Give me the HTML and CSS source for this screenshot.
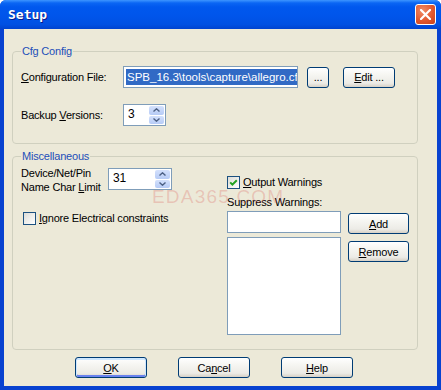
FILE: index.html
```html
<!DOCTYPE html>
<html lang="en">
<head>
    <meta charset="UTF-8">
    <title>Setup</title>
    <link rel="stylesheet" href="styles.css">
</head>
<body>

<div class="window">
    <div class="titlebar">
        <span class="title">Setup</span>
        <button class="close" title="Close">
            <svg width="11" height="11" viewBox="0 0 11 11"><path d="M1 1 L10 10 M10 1 L1 10" stroke="#fff" stroke-width="2.2" stroke-linecap="round"/></svg>
        </button>
    </div>

    <div class="client">
        <fieldset class="group cfg">
            <legend>Cfg Config</legend>
            <div class="row">
                <label class="lbl-file"><u>C</u>onfiguration File:</label>
                <div class="edit file"><span class="sel">SPB_16.3\tools\capture\allegro.cfg</span></div>
                <button class="btn btn-browse">...</button>
                <button class="btn btn-edit"><u>E</u>dit ...</button>
            </div>
            <div class="row row-backup">
                <label class="lbl-file">Backup <u>V</u>ersions:</label>
                <div class="spin spin-backup">
                    <span class="spin-val">3</span>
                    <div class="spin-btns">
                        <span><svg width="7" height="4" viewBox="0 0 7 4"><path d="M0.5 3.5 L3.5 0.8 L6.5 3.5" fill="none" stroke="#4D6185" stroke-width="1.4"/></svg></span>
                        <span><svg width="7" height="4" viewBox="0 0 7 4"><path d="M0.5 0.5 L3.5 3.2 L6.5 0.5" fill="none" stroke="#4D6185" stroke-width="1.4"/></svg></span>
                    </div>
                </div>
            </div>
        </fieldset>

        <fieldset class="group misc">
            <legend>Miscellaneous</legend>
            <div class="misc-cols">
                <div class="misc-left">
                    <div class="limit-row">
                        <label class="lbl-limit">Device/Net/Pin<br>Name Char <u>L</u>imit</label>
                        <div class="spin spin-limit">
                            <span class="spin-val">31</span>
                            <div class="spin-btns">
                                <span><svg width="7" height="4" viewBox="0 0 7 4"><path d="M0.5 3.5 L3.5 0.8 L6.5 3.5" fill="none" stroke="#4D6185" stroke-width="1.4"/></svg></span>
                                <span><svg width="7" height="4" viewBox="0 0 7 4"><path d="M0.5 0.5 L3.5 3.2 L6.5 0.5" fill="none" stroke="#4D6185" stroke-width="1.4"/></svg></span>
                            </div>
                        </div>
                    </div>
                    <div class="check-row check-ignore">
                        <span class="check"></span>
                        <span><u>I</u>gnore Electrical constraints</span>
                    </div>
                </div>

                <div class="misc-right">
                    <div class="check-row check-output">
                        <span class="check">
                            <svg width="11" height="11" viewBox="0 0 11 11"><path d="M2.2 5.4 L4.4 7.6 L8.8 3.2" fill="none" stroke="#21A121" stroke-width="2"/></svg>
                        </span>
                        <span><u>O</u>utput Warnings</span>
                    </div>
                    <div class="suppress-lbl">Suppress Warnings:</div>
                    <div class="suppress">
                        <div class="suppress-fields">
                            <div class="edit warn-input"></div>
                            <div class="edit warn-list"></div>
                        </div>
                        <div class="suppress-btns">
                            <button class="btn btn-side"><u>A</u>dd</button>
                            <button class="btn btn-side"><u>R</u>emove</button>
                        </div>
                    </div>
                </div>

                <div class="watermark">EDA365.COM</div>
            </div>
        </fieldset>

        <div class="actions">
            <button class="btn btn-main btn-default"><u>O</u>K</button>
            <button class="btn btn-main">Ca<u>n</u>cel</button>
            <button class="btn btn-main"><u>H</u>elp</button>
        </div>
    </div>
</div>

</body>
</html>
```

FILE: styles.css
```css
body {
    margin: 0;
    background: #fff;
    font-family: "Liberation Sans", Arial, sans-serif;
    font-size: 11px;
    letter-spacing: -0.2px;
    color: #000;
}

.window {
    width: 441px;
    height: 390px;
    display: flex;
    flex-direction: column;
    background: #0842D0;
    border-radius: 6px 6px 0 0;
    overflow: hidden;
}

.titlebar {
    height: 29px;
    flex: none;
    display: flex;
    align-items: center;
    padding: 0 5px 0 8px;
    background: linear-gradient(to bottom, #3D95FF 0, #0A66F4 3px, #0058EE 7px, #0055EB 55%, #0050E2 85%, #0043CF 100%);
}

.title {
    flex: 1;
    font-family: "DejaVu Sans Mono", monospace;
    font-weight: bold;
    font-size: 13px;
    letter-spacing: 0;
    color: #fff;
    text-shadow: 1px 1px 0 #0A1A8A;
}

.close {
    width: 21px;
    height: 21px;
    padding: 0;
    display: flex;
    align-items: center;
    justify-content: center;
    border: 1px solid #fff;
    border-radius: 3px;
    background: radial-gradient(circle at 35% 30%, #F08C68 0, #E2582F 55%, #C7411B 100%);
}

.client {
    flex: 1;
    margin: 0 4px 4px;
    padding: 15px 0 0 8px;
    background: #ECE9D8;
}

/* group boxes */
.group {
    margin: 0;
    width: 406px;
    box-sizing: border-box;
    min-width: 0;
    padding: 0 8px;
    border: 1px solid #D0D0BF;
    border-radius: 4px;
}

.group legend {
    padding: 0 1px;
    line-height: 14px;
    color: #1D4FB8;
}

.cfg {
    padding-top: 8px;
    padding-bottom: 17px;
}

.row {
    display: flex;
    align-items: center;
    height: 22px;
}

.row-backup {
    margin-top: 16px;
}

.lbl-file {
    width: 102px;
    flex: none;
    white-space: nowrap;
}

.edit {
    background: #fff;
    border: 1px solid #7F9DB9;
    box-sizing: border-box;
}

.file {
    width: 175px;
    height: 22px;
    padding: 2px 0 2px 2px;
    overflow: hidden;
    white-space: nowrap;
}

.sel {
    display: inline-block;
    height: 16px;
    line-height: 16px;
    padding: 0 1px;
    font-size: 11.5px;
    letter-spacing: 0;
    background: #316AC5;
    color: #fff;
}

/* buttons */
.btn {
    font: inherit;
    letter-spacing: inherit;
    color: #000;
    height: 21px;
    box-sizing: border-box;
    padding: 0;
    border: 1px solid #003C74;
    border-radius: 3px;
    background: linear-gradient(to bottom, #fff 0, #F6F6F2 35%, #ECEBE6 80%, #D6D0C5 100%);
}

.btn-browse {
    width: 22px;
    margin-left: 9px;
}

.btn-edit {
    width: 52px;
    margin-left: 14px;
}

.btn-default {
    box-shadow: inset 0 1px 0 1px #CEE7FF, inset 0 -1px 0 1px #6982EE;
}

/* spin boxes */
.spin {
    display: flex;
    height: 22px;
    box-sizing: border-box;
    padding: 1px;
    border: 1px solid #7F9DB9;
    background: #fff;
}

.spin-backup {
    width: 43px;
}

.spin-limit {
    width: 64px;
    margin-top: 2px;
}

.spin-val {
    flex: 1;
    padding-left: 3px;
    line-height: 17px;
    font-size: 12px;
}

.spin-btns {
    width: 15px;
    display: flex;
    flex-direction: column;
    gap: 1px;
}

.spin-btns span {
    flex: 1;
    display: flex;
    align-items: center;
    justify-content: center;
    border-radius: 2px;
    background: linear-gradient(to bottom, #D4E1FC, #B6CBF6);
}

/* miscellaneous */
.misc {
    margin-top: 5px;
    padding-top: 3px;
    padding-bottom: 14px;
}

.misc-cols {
    display: flex;
    position: relative;
}

.misc-left {
    width: 206px;
    flex: none;
}

.limit-row {
    display: flex;
    align-items: flex-start;
}

.lbl-limit {
    width: 87px;
    line-height: 14px;
    white-space: nowrap;
}

.check-row {
    display: flex;
    align-items: center;
    height: 16px;
    gap: 3px;
    white-space: nowrap;
}

.check-ignore {
    margin-top: 16px;
    padding-left: 2px;
}

.check-output {
    margin-top: 8px;
}

.check {
    width: 13px;
    height: 13px;
    flex: none;
    display: flex;
    align-items: center;
    justify-content: center;
    box-sizing: border-box;
    border: 1px solid #1C5180;
    background: linear-gradient(135deg, #DCDCD7, #fff);
}

.suppress-lbl {
    margin-top: 5px;
    line-height: 14px;
}

.suppress {
    display: flex;
    gap: 7px;
    margin-top: 2px;
}

.suppress-fields {
    width: 114px;
}

.warn-input {
    height: 22px;
}

.warn-list {
    height: 98px;
    margin-top: 4px;
}

.suppress-btns {
    display: flex;
    flex-direction: column;
    gap: 7px;
    padding-top: 2px;
}

.btn-side {
    width: 61px;
}

.watermark {
    position: absolute;
    left: 131px;
    top: 21px;
    font-size: 19px;
    line-height: 19px;
    letter-spacing: 1.2px;
    color: rgba(214, 60, 60, 0.22);
    pointer-events: none;
}

.actions {
    display: flex;
    gap: 31px;
    margin-top: 7px;
    padding-left: 63px;
}

.btn-main {
    width: 72px;
}
```
